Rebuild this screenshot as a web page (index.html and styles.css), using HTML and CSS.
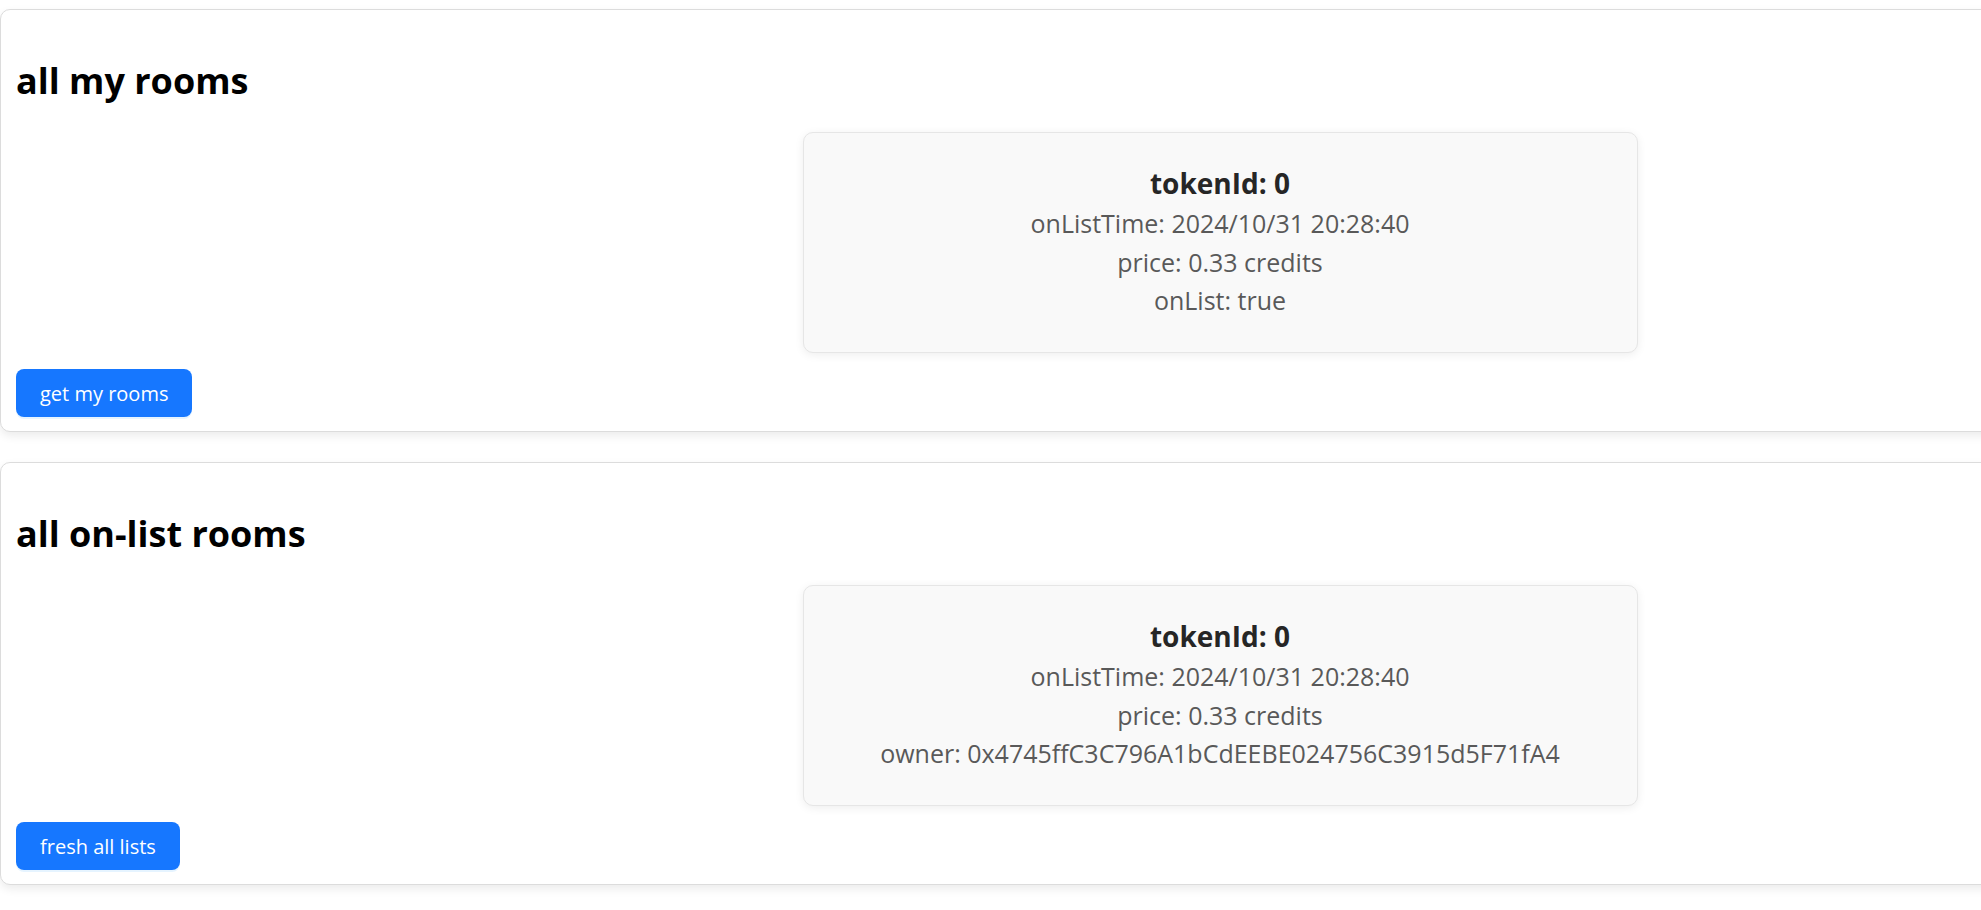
FILE: index.html
```html
<!DOCTYPE html>
<html lang="en">
<head>
<meta charset="utf-8">
<title>rooms</title>
<link rel="stylesheet" href="styles.css">
</head>
<body>
  <section class="panel">
    <h1 class="panel-title">all my rooms</h1>
    <div class="room-list">
      <div class="room-card">
        <div class="room-id">tokenId: 0</div>
        <div class="room-line">onListTime: 2024/10/31 20:28:40</div>
        <div class="room-line">price: 0.33 credits</div>
        <div class="room-line">onList: true</div>
      </div>
    </div>
    <button class="btn" type="button">get my rooms</button>
  </section>

  <section class="panel">
    <h1 class="panel-title">all on-list rooms</h1>
    <div class="room-list">
      <div class="room-card">
        <div class="room-id">tokenId: 0</div>
        <div class="room-line">onListTime: 2024/10/31 20:28:40</div>
        <div class="room-line">price: 0.33 credits</div>
        <div class="room-line">owner: 0x4745ffC3C796A1bCdEEBE024756C3915d5F71fA4</div>
      </div>
    </div>
    <button class="btn" type="button">fresh all lists</button>
  </section>
</body>
</html>
```

FILE: styles.css
```css
html {
  overflow: hidden;
}

body {
  margin: 0;
  padding-top: 9px;
  background: #ffffff;
  font-family: "Open Sans", "Noto Sans", "Liberation Sans", sans-serif;
  color: #000;
}

.panel {
  width: 2440px;
  box-sizing: border-box;
  border: 1px solid #dcdcdc;
  border-radius: 10px;
  padding: 15px 15px 14px;
  margin-bottom: 30px;
  background: #fff;
  box-shadow: 0 4px 10px rgba(0, 0, 0, 0.08);
}

.panel-title {
  font-size: 36px;
  font-weight: 700;
  line-height: 53px;
  margin: 29px 0 25px;
  color: #000;
}

.room-list {
  display: flex;
  justify-content: center;
  margin-bottom: 16.5px;
}

.room-card {
  width: 835px;
  box-sizing: border-box;
  background: #f9f9f9;
  border: 1px solid #e6e6e6;
  border-radius: 10px;
  box-shadow: 0 2px 10px rgba(0, 0, 0, 0.07);
  padding: 29px 20px 32px;
  text-align: center;
}

.room-id {
  font-size: 28px;
  font-weight: 700;
  line-height: 42px;
  color: #262626;
}

.room-line {
  font-size: 25px;
  line-height: 38.5px;
  color: #595959;
}

.btn {
  display: block;
  height: 48px;
  padding: 0 24px;
  font-family: "Open Sans", "Noto Sans", "Liberation Sans", sans-serif;
  font-size: 20px;
  background: #1677ff;
  color: #fff;
  border: none;
  border-radius: 8px;
  box-shadow: 0 2px 0 rgba(5, 145, 255, 0.1);
  cursor: pointer;
}
```
